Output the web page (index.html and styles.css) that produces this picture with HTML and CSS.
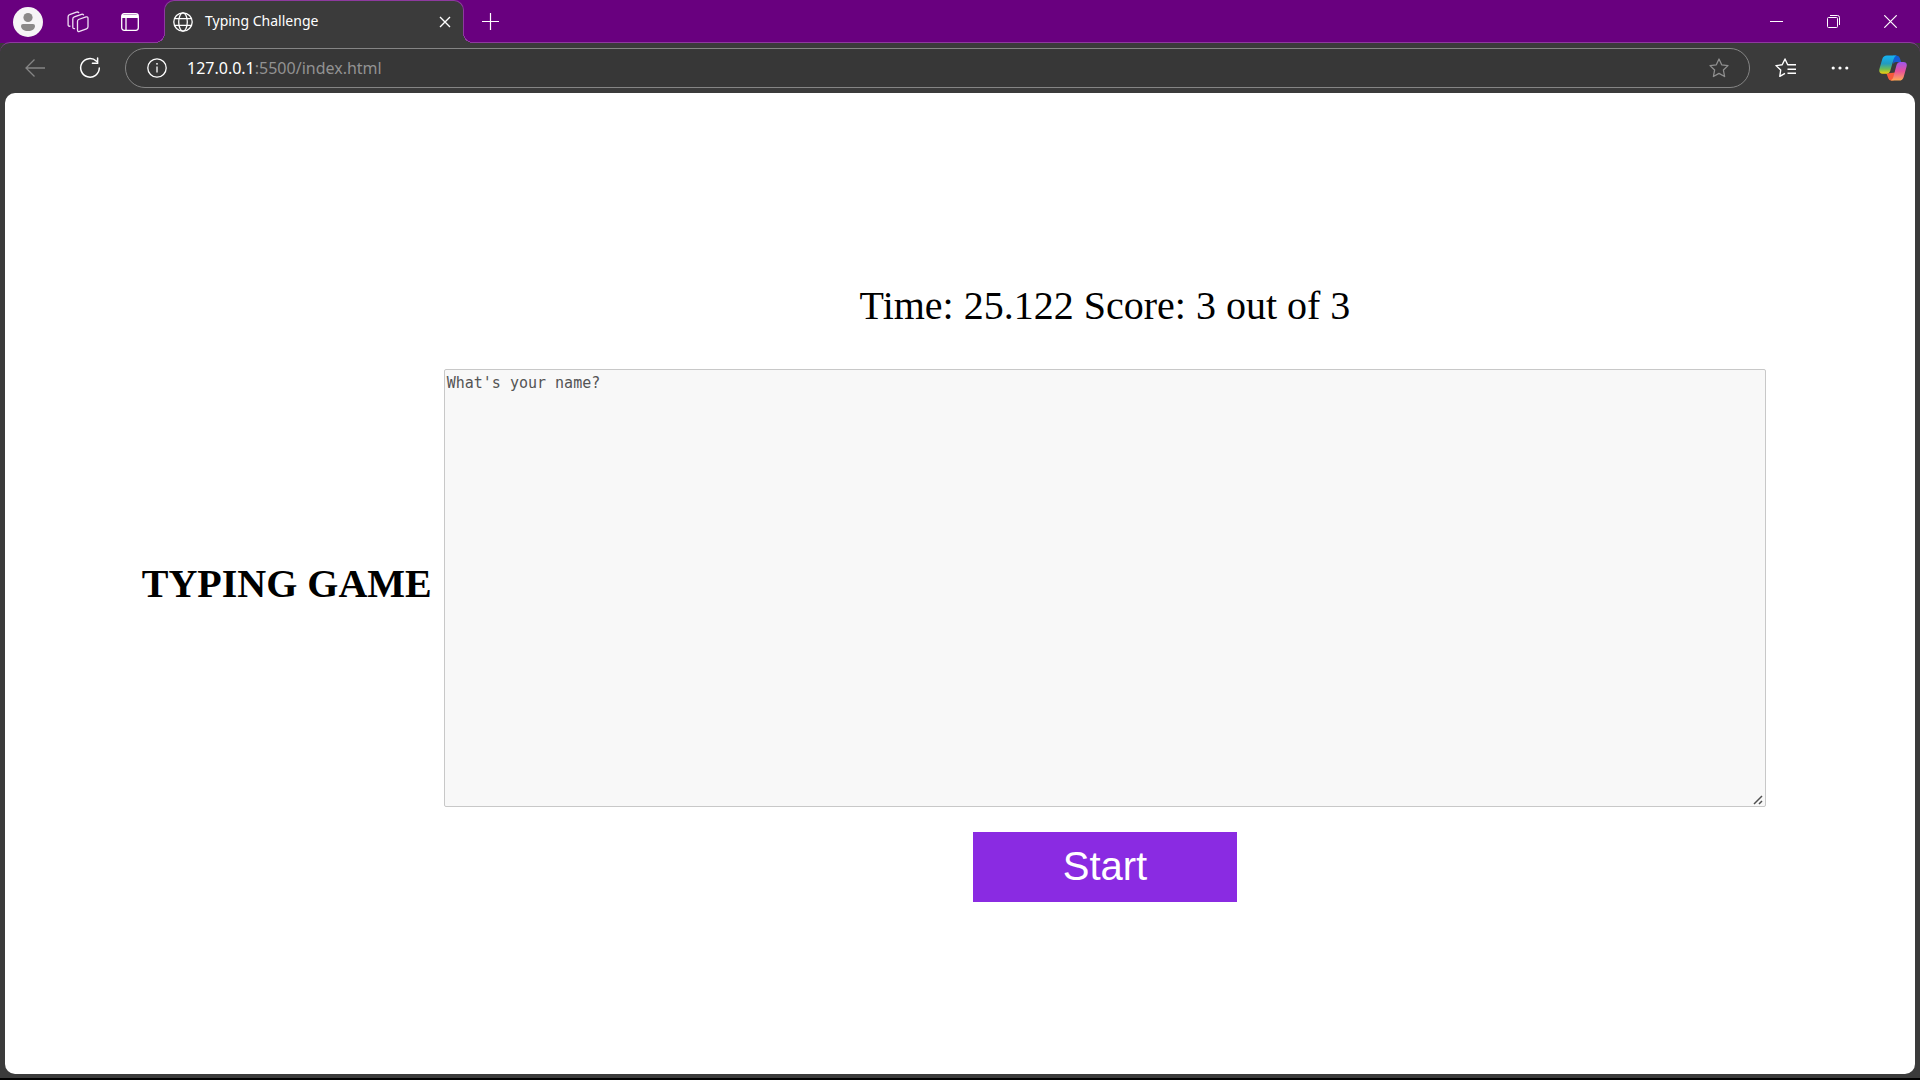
FILE: index.html
```html
<!DOCTYPE html>
<html lang="en">
<head>
<meta charset="utf-8">
<title>Typing Challenge</title>
<link rel="stylesheet" href="styles.css">
</head>
<body>
<div class="browser">
  <header class="tab-strip">
    <button class="icon-button profile" type="button" aria-label="Profile">
      <svg width="30" height="30" viewBox="0 0 30 30"><circle cx="15" cy="15" r="15" fill="#f6f4f6"/><circle cx="15" cy="10.500" r="4.600" fill="#8b8888"/><path d="M10 17h10a2 2 0 0 1 2 2c0 3-3 5-7 5s-7-2-7-5a2 2 0 0 1 2-2z" fill="#8b8888"/></svg>
    </button>
    <button class="icon-button workspaces" type="button" aria-label="Workspaces">
      <svg width="22" height="22" viewBox="0 0 22 22" fill="none" stroke="#f0e0f4" stroke-width="1.300" stroke-linejoin="round" stroke-linecap="round"><path d="M11.500 8.500l7.500-2.600q2-.5 2 1.500v8.400q0 1.500-1.500 2l-7 2.600q-2 .6-2-1.300V10.500q0-1.500 1-2z"/><path d="M7.500 17.600q-1.700.3-1.700-1.500V8q0-1.600 1.500-2.100l7.200-2.600q1.300-.4 2 .5"/><path d="M3 15.200q-1.900.4-1.900-1.500V5.800q0-1.600 1.500-2.100L9.500 1.200q1.500-.5 2.200.4"/></svg>
    </button>
    <button class="icon-button tab-actions" type="button" aria-label="Tab actions">
      <svg width="18" height="18" viewBox="0 0 18 18" fill="none" stroke="#fff" stroke-width="1.300"><rect x=".7" y=".7" width="16.600" height="16.600" rx="2.500"/><path d="M1 1.500h16v3.500H1z" fill="#fff" stroke="none"/><path d="M5 5v12"/></svg>
    </button>
    <div class="tab">
      <svg width="20" height="20" viewBox="0 0 20 20" fill="none" stroke="#fff" stroke-width="1.300"><circle cx="10" cy="10" r="9.200"/><ellipse cx="10" cy="10" rx="4.300" ry="9.200"/><path d="M1.500 6.700h17M1.500 13.300h17"/></svg>
      <span class="tab-title">Typing Challenge</span>
      <button class="icon-button tab-close" type="button" aria-label="Close tab">
        <svg width="12" height="12" viewBox="0 0 12 12" stroke="#fff" stroke-width="1.400"><path d="M1 1l10 10M11 1L1 11"/></svg>
      </button>
    </div>
    <button class="icon-button new-tab" type="button" aria-label="New tab">
      <svg width="17" height="17" viewBox="0 0 17 17" stroke="#fff" stroke-width="1.200"><path d="M8.500 0v17M0 8.500h17"/></svg>
    </button>
    <div class="window-controls">
      <button class="icon-button" type="button" aria-label="Minimize">
        <svg width="13" height="13" viewBox="0 0 13 13" stroke="#fff"><path d="M0 6.500h13"/></svg>
      </button>
      <button class="icon-button" type="button" aria-label="Restore">
        <svg width="13" height="13" viewBox="0 0 13 13" fill="none" stroke="#fff"><rect x=".5" y="2.500" width="10" height="10" rx="1"/><path d="M3 .5h7.500a2 2 0 0 1 2 2V10"/></svg>
      </button>
      <button class="icon-button" type="button" aria-label="Close">
        <svg width="13" height="13" viewBox="0 0 13 13" stroke="#fff" stroke-width="1.200"><path d="M.3.3l12.400 12.400M12.700.3L.3 12.700"/></svg>
      </button>
    </div>
  </header>

  <nav class="toolbar">
    <button class="icon-button back" type="button" aria-label="Back">
      <svg width="20" height="18" viewBox="0 0 20 18" fill="none" stroke="#858585" stroke-width="1.300"><path d="M20 9H1M9.500.5L1 9l8.500 8.500"/></svg>
    </button>
    <button class="icon-button reload" type="button" aria-label="Refresh">
      <svg width="22" height="22" viewBox="0 0 22 22" fill="none" stroke="#fff" stroke-width="1.500" stroke-linecap="round"><path d="M17.500 4.200A9.300 9.300 0 1 0 20.300 11M18.600 1v5.200h-5.200"/></svg>
    </button>
    <div class="address-bar">
      <svg width="20" height="20" viewBox="0 0 20 20" fill="none" stroke="#fff" stroke-width="1.300"><circle cx="10" cy="10" r="9.200"/><path d="M10 8.500v6"/><circle cx="10" cy="5.800" r=".9" fill="#fff" stroke="none"/></svg>
      <a class="address" href="#game"><span class="host">127.0.0.1</span>:5500/index.html</a>
      <button class="icon-button" type="button" aria-label="Add to favorites">
        <svg width="20" height="20" viewBox="0 0 20 20" fill="none" stroke="#8f8f8f" stroke-width="1.300" stroke-linejoin="round"><path d="M10 1l2.700 5.800 6.300.8-4.600 4.400 1.200 6.500L10 15.400l-5.600 3.100L5.600 12 1 7.600l6.300-.8z"/></svg>
      </button>
    </div>
    <button class="icon-button favorites" type="button" aria-label="Favorites">
      <svg width="21" height="20" viewBox="0 0 21 20" fill="none" stroke="#fff" stroke-width="1.400" stroke-linejoin="round"><path d="M10 15.300l-5.200 3L5.700 12 1 7.600l6.200-.8L10 1l2.700 5.800h8.300M12.500 11.200H21M12.500 15.300H21"/></svg>
    </button>
    <button class="icon-button more" type="button" aria-label="Settings and more">
      <svg width="18" height="4" viewBox="0 0 18 4" fill="#fff"><circle cx="2.200" cy="2" r="1.600"/><circle cx="9" cy="2" r="1.600"/><circle cx="15.800" cy="2" r="1.600"/></svg>
    </button>
    <button class="icon-button copilot" type="button" aria-label="Copilot">
      <svg width="28" height="26" viewBox="0 0 28 26">
        <defs>
          <linearGradient id="cool" x1="0" y1="0" x2="0" y2="1"><stop offset="0" stop-color="#14b3f4"/><stop offset=".45" stop-color="#239bc0"/><stop offset=".75" stop-color="#6fbd54"/><stop offset="1" stop-color="#f3ce0b"/></linearGradient>
          <linearGradient id="warm" x1="0" y1="0" x2="0" y2="1"><stop offset="0" stop-color="#9d56ee"/><stop offset=".5" stop-color="#e8509b"/><stop offset="1" stop-color="#ffaa55"/></linearGradient>
          <linearGradient id="fold" x1="0" y1="0" x2="1" y2="1"><stop offset="0" stop-color="#075dd8"/><stop offset="1" stop-color="#2459cf"/></linearGradient>
        </defs>
        <path d="M14 .5h3.500q2.500 0 3.300 2.500l1.300 4H17q-2 0-2.700 2z" fill="url(#fold)"/>
        <path d="M7 18.500q1 .5 1.600 3l.5 1.500q.8 2.500 3.200 2.500h2.200l2-8z" fill="#f65a3c"/>
        <path d="M8 .5h9.500Q15.500 1 14.700 4l-3.500 12q-.8 2.700-3.500 2.700H3.500Q-.5 18.700.4 14L3.300 4Q4.300.5 8 .5z" fill="url(#cool)"/>
        <path d="M20 25.500h-8.500q2-.4 2.800-3.200l3.300-12.600Q18.400 7 21 7h3.400q4.200 0 3.200 4.600l-2.900 10.300q-1 3.600-4.700 3.600z" fill="url(#warm)"/>
      </svg>
    </button>
  </nav>

  <main class="page" id="game">
    <h1 class="title">TYPING GAME</h1>
    <section class="game">
      <p class="status">Time: 25.122 Score: 3 out of 3</p>
      <textarea class="typing-area" aria-label="Typing area" disabled>What's your name?</textarea>
      <button class="start" type="button">Start</button>
    </section>
  </main>
</div>
</body>
</html>
```
FILE: styles.css
```css
* {
  box-sizing: border-box;
}

body {
  margin: 0;
  background: #000;
  font-family: "Liberation Serif", "Times New Roman", serif;
}

.browser {
  display: flex;
  flex-direction: column;
  min-height: calc(100vh - 2px);
  padding-bottom: 4px;
  background: #3b3b3b;
}

.icon-button {
  display: flex;
  flex: none;
  align-items: center;
  justify-content: center;
  padding: 0;
  border: 0;
  background: none;
}

svg {
  display: block;
  flex: none;
}

.tab-strip {
  display: flex;
  align-items: center;
  height: 43px;
  padding: 0 1px 0 13px;
  background: #69007f;
}

.workspaces {
  margin-left: 24px;
}

.tab-actions {
  margin-left: 32px;
}

.tab {
  position: relative;
  z-index: 1;
  display: flex;
  align-self: flex-end;
  align-items: center;
  width: 300px;
  height: 43px;
  margin-left: 25px;
  padding: 0 12px 0 8px;
  border: 1px solid #8e3a9f;
  border-bottom: 0;
  border-radius: 10px 10px 0 0;
  background: #3b3b3b;
}

.tab::before,
.tab::after {
  content: "";
  position: absolute;
  bottom: 0;
  width: 10px;
  height: 10px;
}

.tab::before {
  left: -10px;
  background: radial-gradient(circle at 0 0, #69007f 9px, #8e3a9f 9px, #8e3a9f 10px, #3b3b3b 10px);
}

.tab::after {
  right: -10px;
  background: radial-gradient(circle at 100% 0, #69007f 9px, #8e3a9f 9px, #8e3a9f 10px, #3b3b3b 10px);
}

.tab-title {
  flex: 1;
  padding: 0 0 2px 12px;
  color: #fff;
  font: 14px/20px "Noto Sans", "Open Sans", sans-serif;
}

.new-tab {
  margin-left: 18px;
}

.window-controls {
  display: flex;
  align-self: stretch;
  margin-left: auto;
}

.window-controls .icon-button {
  width: 57px;
}

.toolbar {
  display: flex;
  align-items: center;
  height: 51px;
  margin-top: -1px;
  padding: 0 13px 0 25px;
  border-top: 1px solid #8e3a9f;
  border-radius: 10px 10px 0 0;
  background: #3b3b3b;
}

.reload {
  margin-left: 34px;
}

.address-bar {
  display: flex;
  flex: 1;
  align-items: center;
  height: 40px;
  margin-left: 24px;
  padding: 0 20px 0 21px;
  border: 1px solid #858585;
  border-radius: 20px;
  background: #373737;
}

.address {
  flex: 1;
  padding-left: 20px;
  color: #929292;
  font: 16px/24px "Noto Sans", "Open Sans", sans-serif;
  text-decoration: none;
}

.host {
  color: #fff;
}

.favorites {
  margin-left: 25px;
}

.more {
  margin-left: 35px;
}

.copilot {
  margin-left: 30px;
}

.page {
  display: flex;
  flex: 1;
  align-items: center;
  justify-content: center;
  margin: 0 5px;
  border-radius: 10px;
  background: #fff;
}

.title {
  margin: 0;
  font-size: 40px;
  line-height: 46px;
  white-space: nowrap;
}

.game {
  display: flex;
  flex-direction: column;
  align-items: center;
  width: 70.5%;
  padding: 0 12px;
}

.status {
  margin: 0;
  padding: 18px 0 40px;
  font-size: 40px;
  line-height: 46px;
}

.typing-area {
  width: 100%;
  height: 438px;
  margin: 0 0 25px;
  padding: 3px 2px;
  border: 1px solid #c8c8c8;
  border-radius: 2px;
  background: #f8f8f8;
  color: #545454;
  font: 15px/20px "DejaVu Sans Mono", monospace;
  resize: both;
}

.typing-area::-webkit-resizer {
  background: url("data:image/svg+xml,%3Csvg xmlns='http://www.w3.org/2000/svg' width='12' height='12' fill='none' stroke='%23505050' stroke-width='1.500'%3E%3Cpath d='M1 10L9 2M6 10L9 7'/%3E%3C/svg%3E") no-repeat right bottom;
}

.start {
  width: 20%;
  height: 70px;
  padding: 0 0 2px;
  border: 0;
  background: #8a2be2;
  color: #fff;
  font: 40px/46px "Liberation Sans", Arial, sans-serif;
}
```
